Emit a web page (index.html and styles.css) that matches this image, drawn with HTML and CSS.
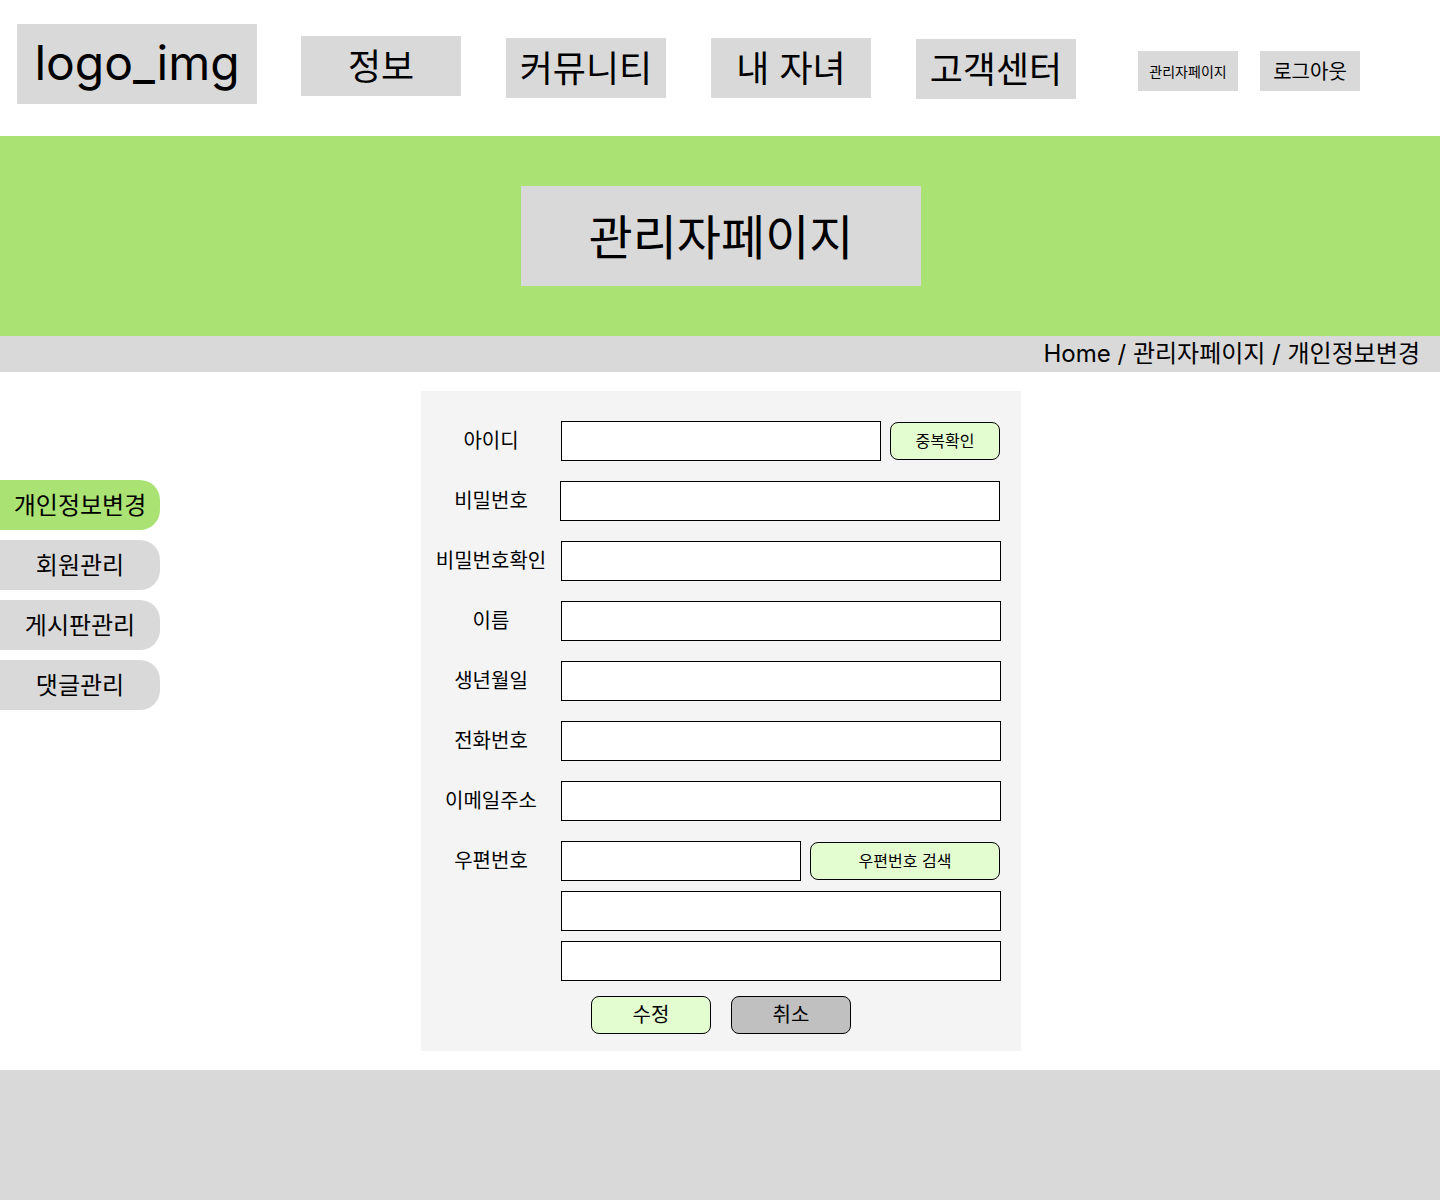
FILE: index.html
```html
<!DOCTYPE html>
<html lang="ko">
<head>
<meta charset="utf-8">
<title>관리자페이지</title>
<link rel="stylesheet" href="styles.css">
</head>
<body>
<header class="header">
  <div class="logo">logo_img</div>
  <nav class="nav">
    <a class="nav-item n1">정보</a>
    <a class="nav-item n2">커뮤니티</a>
    <a class="nav-item n3">내 자녀</a>
    <a class="nav-item n4">고객센터</a>
  </nav>
  <div class="util">
    <a class="util-item small">관리자페이지</a>
    <a class="util-item">로그아웃</a>
  </div>
</header>
<section class="hero">
  <div class="hero-title">관리자페이지</div>
</section>
<div class="crumb">Home / 관리자페이지 / 개인정보변경</div>
<main class="main">
  <aside class="side">
    <a class="side-item active">개인정보변경</a>
    <a class="side-item">회원관리</a>
    <a class="side-item">게시판관리</a>
    <a class="side-item">댓글관리</a>
  </aside>
  <form class="panel">
    <div class="row">
      <label class="lbl">아이디</label>
      <input class="inp w320" type="text">
      <button type="button" class="btn-chk">중복확인</button>
    </div>
    <div class="row">
      <label class="lbl">비밀번호</label>
      <input class="inp full shift" type="password">
    </div>
    <div class="row">
      <label class="lbl">비밀번호확인</label>
      <input class="inp full" type="password">
    </div>
    <div class="row">
      <label class="lbl">이름</label>
      <input class="inp full" type="text">
    </div>
    <div class="row">
      <label class="lbl">생년월일</label>
      <input class="inp full" type="text">
    </div>
    <div class="row">
      <label class="lbl">전화번호</label>
      <input class="inp full" type="text">
    </div>
    <div class="row">
      <label class="lbl">이메일주소</label>
      <input class="inp full" type="text">
    </div>
    <div class="row">
      <label class="lbl">우편번호</label>
      <input class="inp w240" type="text">
      <button type="button" class="btn-zip">우편번호 검색</button>
    </div>
    <div class="row sub">
      <span class="lbl"></span>
      <input class="inp full" type="text">
    </div>
    <div class="row sub">
      <span class="lbl"></span>
      <input class="inp full" type="text">
    </div>
    <div class="actions">
      <button type="button" class="btn-act ok">수정</button>
      <button type="button" class="btn-act cancel">취소</button>
    </div>
  </form>
</main>
<footer class="footer"></footer>
</body>
</html>
```
FILE: styles.css
```css
* { box-sizing: border-box; }
body {
  margin: 0;
  font-family: Inter, "Noto Sans CJK KR", sans-serif;
  color: #000;
  background: #fff;
}
a { color: inherit; text-decoration: none; }

.header {
  height: 136px;
  display: flex;
  align-items: flex-start;
  padding-left: 17px;
}
.logo {
  margin-top: 24px;
  width: 240px;
  height: 80px;
  background: #d9d9d9;
  font-size: 48px;
  display: flex;
  align-items: center;
  justify-content: center;
  padding-bottom: 4px;
}
.nav {
  display: flex;
  gap: 45px;
  margin-left: 44px;
}
.nav-item {
  width: 160px;
  height: 60px;
  background: #d9d9d9;
  font-size: 36px;
  display: flex;
  align-items: center;
  justify-content: center;
  padding-bottom: 4px;
}
.n1 { margin-top: 36px; }
.n2, .n3 { margin-top: 38px; }
.n4 { margin-top: 39px; }
.util {
  display: flex;
  gap: 22px;
  margin-left: 62px;
  margin-top: 51px;
}
.util-item {
  width: 100px;
  height: 40px;
  background: #d9d9d9;
  font-size: 20px;
  display: flex;
  align-items: center;
  justify-content: center;
  padding-bottom: 2px;
}
.util-item.small { font-size: 14px; padding-bottom: 0; }

.hero {
  height: 200px;
  background: #aae373;
  display: flex;
  justify-content: center;
  padding-top: 50px;
  padding-left: 2px;
}
.hero-title {
  width: 400px;
  height: 100px;
  background: #d9d9d9;
  font-size: 48px;
  display: flex;
  align-items: center;
  justify-content: center;
  padding-bottom: 4px;
}

.crumb {
  height: 36px;
  background: #d9d9d9;
  font-size: 24px;
  text-align: right;
  padding-right: 20px;
  line-height: 36px;
}

.main {
  display: flex;
  align-items: flex-start;
  padding: 19px 0;
}
.side {
  width: 160px;
  margin-top: 89px;
  display: flex;
  flex-direction: column;
  gap: 10px;
}
.side-item {
  height: 50px;
  background: #d9d9d9;
  border-radius: 0 20px 20px 0;
  font-size: 24px;
  display: flex;
  align-items: center;
  justify-content: center;
  padding-bottom: 4px;
}
.side-item.active { background: #aae373; }

.panel {
  margin-left: 261px;
  width: 600px;
  background: #f4f4f4;
  padding: 30px 20px 17px 0;
  display: flex;
  flex-direction: column;
  gap: 20px;
}
.row {
  display: flex;
  align-items: center;
  height: 40px;
}
.row.sub { margin-top: -10px; }
.lbl {
  width: 140px;
  text-align: center;
  font-size: 20px;
  padding-bottom: 4px;
}
.inp {
  height: 40px;
  border: 1px solid #000;
  background: #fff;
  margin: 0;
  padding: 0 8px;
  font-family: inherit;
  font-size: 16px;
}
.inp.w320 { width: 320px; }
.inp.w240 { width: 240px; }
.inp.full { width: 440px; }
.inp.shift { margin-left: -1px; }

.btn-chk, .btn-zip {
  height: 38px;
  background: #e4fdd0;
  border: 1px solid #000;
  border-radius: 8px;
  font-family: inherit;
  font-size: 16px;
  color: #000;
  padding: 0 0 2px;
}
.btn-chk { width: 110px; margin-left: 9px; }
.btn-zip { width: 190px; margin-left: 9px; }

.actions {
  display: flex;
  gap: 20px;
  padding-left: 170px;
  margin-top: -5px;
}
.btn-act {
  width: 120px;
  height: 38px;
  border: 1px solid #000;
  border-radius: 8px;
  font-family: inherit;
  font-size: 20px;
  color: #000;
  padding: 0 0 4px;
}
.btn-act.ok { background: #e4fdd0; }
.btn-act.cancel { background: #c0c0c0; }

.footer {
  height: 130px;
  background: #d9d9d9;
}
```
